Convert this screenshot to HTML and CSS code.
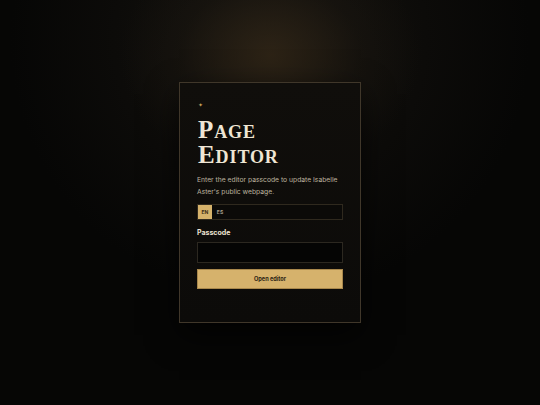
FILE: index.html
```html
<!DOCTYPE html>
<html lang="en">
<head>
<meta charset="utf-8">
<title>Page Editor</title>
<link rel="stylesheet" href="styles.css">
</head>
<body>
<main class="stage">
  <section class="card">
    <div class="mark">✦</div>
    <h1 class="title">Page<br>Editor</h1>
    <p class="desc">Enter the editor passcode to update Isabelle Aster's public webpage.</p>
    <div class="lang">
      <button class="lang-btn active">EN</button>
      <button class="lang-btn">ES</button>
    </div>
    <label class="label" for="pass">Passcode</label>
    <input class="input" id="pass" type="password">
    <button class="submit">Open editor</button>
  </section>
</main>
</body>
</html>
```
FILE: styles.css
```css
html, body {
  margin: 0;
  padding: 0;
  width: 540px;
  height: 405px;
  overflow: hidden;
}
body {
  background:
    radial-gradient(ellipse 150px 120px at 270px 55px, rgba(52, 40, 24, 0.75), rgba(30, 25, 18, 0.35) 60%, rgba(0,0,0,0) 100%),
    radial-gradient(ellipse 260px 260px at 270px 40px, #17140f 0%, #0c0b09 60%, #060605 100%);
  font-family: Inter, "Noto Sans", sans-serif;
}
.stage {
  height: 405px;
  display: flex;
  justify-content: center;
  align-items: flex-start;
  padding-top: 82px;
  box-sizing: border-box;
}
.card {
  width: 182px;
  height: 241px;
  box-sizing: border-box;
  border: 1px solid #40372a;
  background: linear-gradient(180deg, #100e0b, #0c0b09);
  padding: 19px 17px 0 17px;
  box-shadow: 0 12px 30px rgba(0,0,0,0.7);
  display: flex;
  flex-direction: column;
}
.mark {
  color: #c9a35a;
  font-size: 6px;
  line-height: 6px;
  height: 6px;
  margin-left: 1px;
}
.title {
  margin: 9px 0 0 1px;
  font-family: "Liberation Serif", "DejaVu Serif", serif;
  font-variant: small-caps;
  font-weight: 700;
  font-size: 25px;
  line-height: 25px;
  letter-spacing: 0.9px;
  color: #efe6d4;
}
.desc {
  margin: 7px 0 0 0;
  font-size: 6.75px;
  line-height: 12px;
  color: #bdb39f;
}
.lang {
  margin-top: 6px;
  height: 16px;
  box-sizing: border-box;
  border: 1px solid #2f291e;
  background: #0b0a08;
  display: flex;
  gap: 0;
}
.lang-btn {
  border: 0;
  margin: 0;
  padding: 0 5px;
  background: transparent;
  color: #a89f8c;
  font-family: Inter, sans-serif;
  font-weight: 700;
  font-size: 5px;
  height: 14px;
  line-height: 14px;
  width: 14px;
  display: flex;
  align-items: center;
  justify-content: center;
}
.lang-btn.active {
  background: #d5b26b;
  color: #3a2c14;
}
.lang-btn + .lang-btn {
  margin-left: 1px;
}
.label {
  margin-top: 7px;
  font-size: 7px;
  line-height: 12px;
  font-weight: 700;
  color: #ece3d2;
}
.input {
  margin: 3px 0 0 0;
  height: 21px;
  box-sizing: border-box;
  background: #050504;
  border: 1px solid #2c2820;
  padding: 0 6px;
  outline: none;
}
.submit {
  margin-top: 6px;
  height: 20px;
  box-sizing: border-box;
  background: #d6b26c;
  border: 1px solid #a9884c;
  color: #2b2113;
  font-family: Inter, sans-serif;
  font-weight: 700;
  font-size: 5.6px;
  padding: 0;
}
```
